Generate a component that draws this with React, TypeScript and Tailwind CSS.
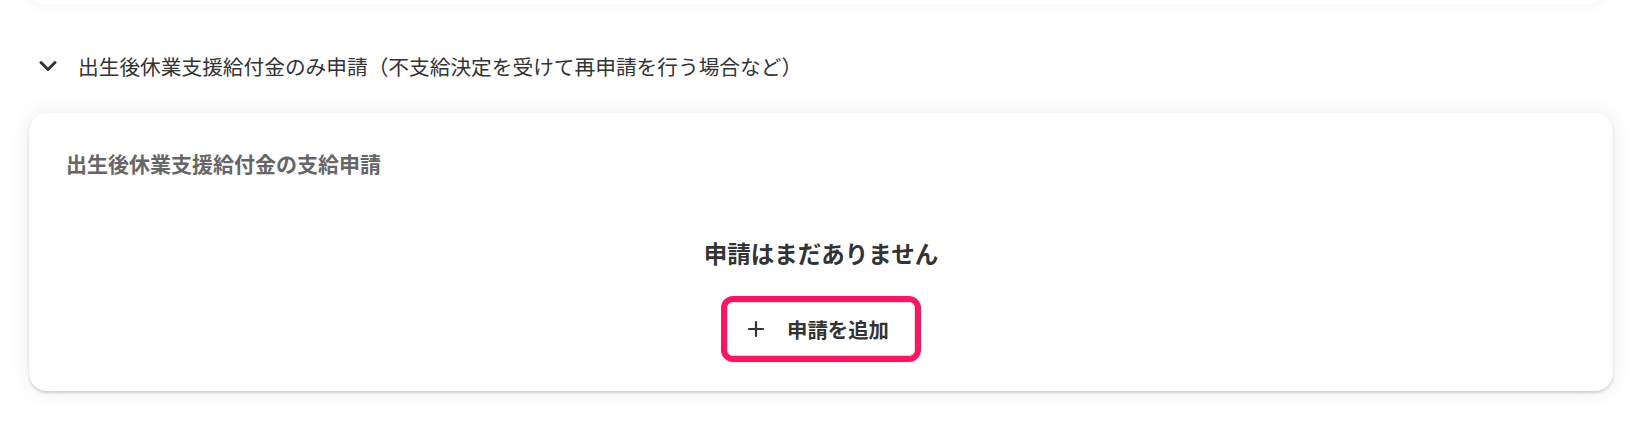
import { Plus } from "lucide-react";

function ChevronDown() {
  return (
    <svg width="18" height="12" viewBox="0 0 18 12" fill="none" className="shrink-0">
      <path d="M2 2.5 9 9.5 16 2.5" stroke="#333" strokeWidth="3" strokeLinecap="round" strokeLinejoin="round" />
    </svg>
  );
}

function EmptyApplications() {
  return (
    <div className="flex flex-col items-center">
      <p className="text-[23.5px] leading-[34px] font-bold text-[#333]">申請はまだありません</p>
      <div className="mt-[26px] border-[6px] border-[#ff1460] rounded-[12px]">
        <button className="flex items-center w-[188px] h-[54px] pl-[16px] border border-[#dcdcdc] rounded-[7px] bg-white">
          <Plus size={24} strokeWidth={2.2} color="#333" className="shrink-0" />
          <span className="ml-[19px] text-[20.4px] leading-[28px] font-bold text-[#333]">申請を追加</span>
        </button>
      </div>
    </div>
  );
}

export default function App() {
  return (
    <div className="w-[1645px] h-[424px] overflow-hidden bg-white font-['Noto_Sans_CJK_JP','Noto_Sans',sans-serif]">
      <div className="pl-[29px] pr-[32px]">
        {/* bottom edge of the previous card */}
        <div className="h-[40px] -mt-[36px] mr-[10px] rounded-b-2xl bg-white shadow-[0_0_16px_rgba(0,0,0,0.05)]" />

        <div className="flex items-center h-[40px] mt-[42px] pl-[10px]">
          <ChevronDown />
          <h2 className="ml-[21px] text-[20.7px] leading-[30px] text-[#333]">
            出生後休業支援給付金のみ申請（不支給決定を受けて再申請を行う場合など）
          </h2>
        </div>

        <section className="mt-[27px] rounded-[18px] bg-white pt-[35px] pb-[29px] px-[37px] shadow-[0_2px_3px_rgba(0,0,0,0.16),0_0_22px_rgba(0,0,0,0.07)]">
          <h3 className="text-[21px] leading-[30px] font-bold text-[#666]">出生後休業支援給付金の支給申請</h3>
          <div className="mt-[58px]">
            <EmptyApplications />
          </div>
        </section>
      </div>
    </div>
  );
}
